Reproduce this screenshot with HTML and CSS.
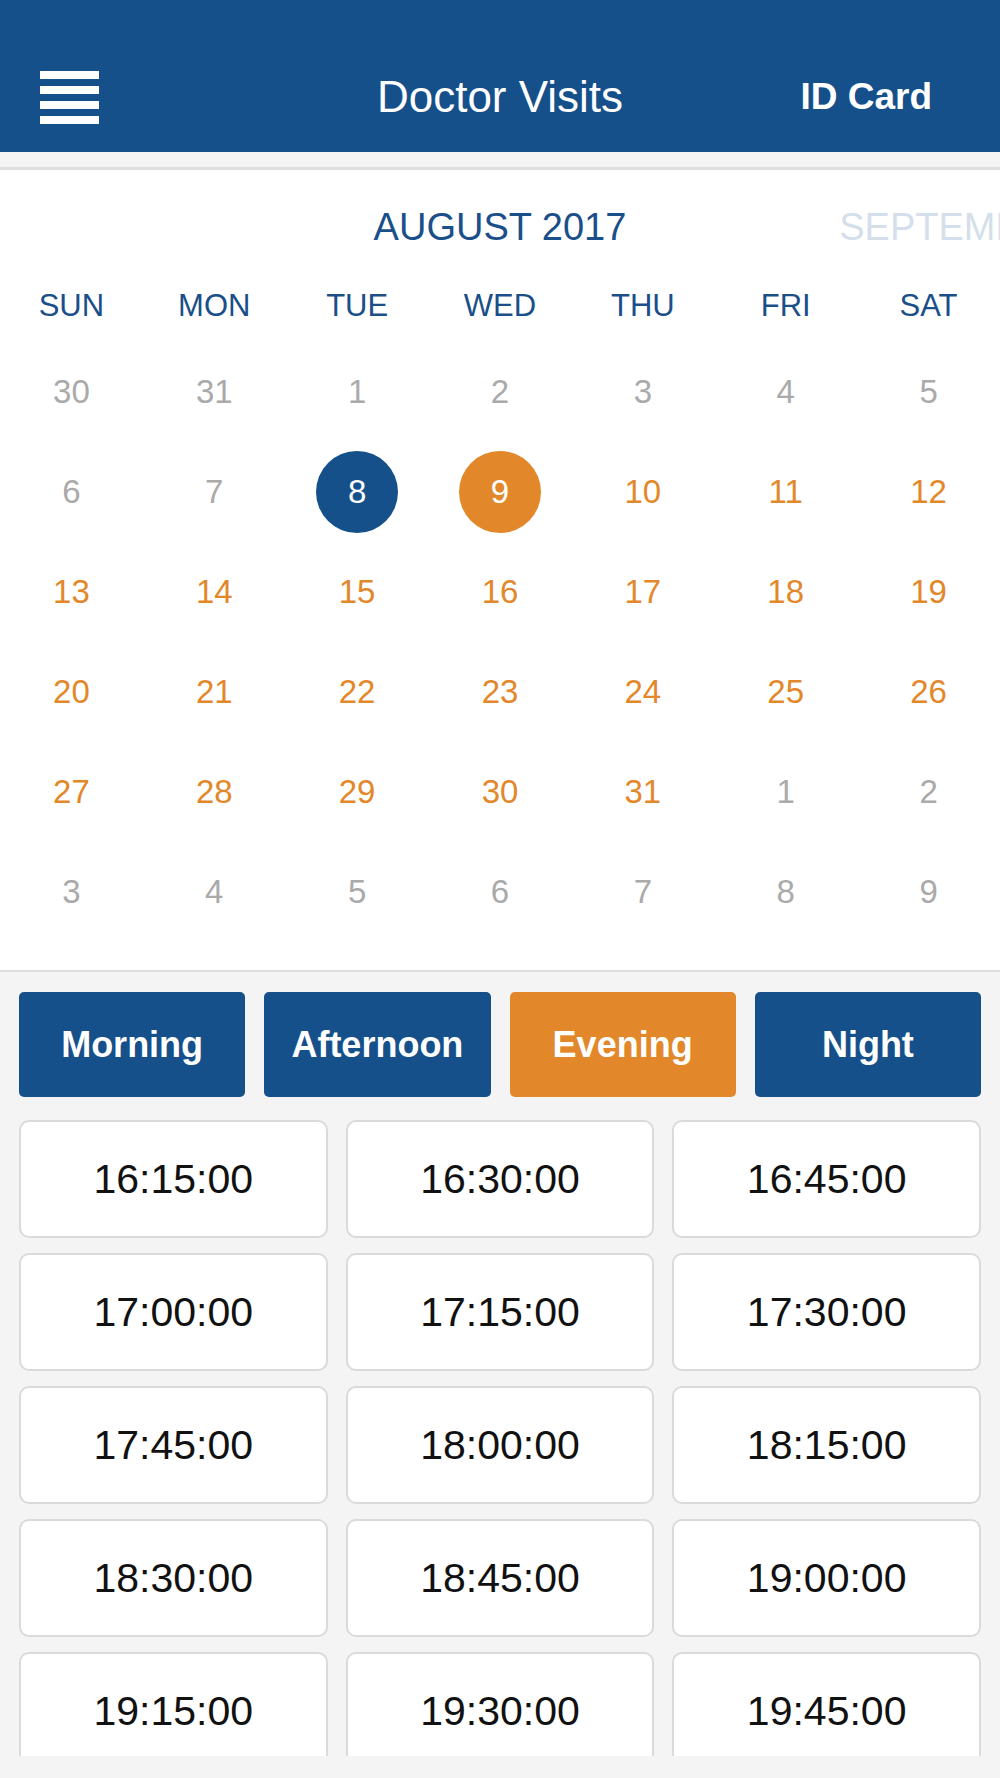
FILE: index.html
```html
<!DOCTYPE html>
<html lang="en">
<head>
    <meta charset="UTF-8">
    <meta name="viewport" content="width=device-width, initial-scale=1.0">
    <title>Doctor Visits</title>
    <link rel="stylesheet" href="styles.css">
</head>
<body>
    <div class="top-bar">
        <div class="menu-btn">
            <span></span><span></span><span></span><span></span>
        </div>
        <div class="top-title">Doctor Visits</div>
        <div class="top-link">ID Card</div>
    </div>
    <div class="top-gap"></div>

    <div class="calendar">
        <div class="month-strip">
            <div class="month-track">
                <div class="month-label">AUGUST 2017</div>
                <div class="month-label month-next">SEPTEMBER 2017</div>
            </div>
        </div>
        <div class="week-row">
            <div>SUN</div><div>MON</div><div>TUE</div><div>WED</div><div>THU</div><div>FRI</div><div>SAT</div>
        </div>
        <div class="day-grid">
            <div class="day muted">30</div><div class="day muted">31</div><div class="day muted">1</div><div class="day muted">2</div><div class="day muted">3</div><div class="day muted">4</div><div class="day muted">5</div>
            <div class="day muted">6</div><div class="day muted">7</div><div class="day"><span class="dot dot-today">8</span></div><div class="day"><span class="dot dot-picked">9</span></div><div class="day open">10</div><div class="day open">11</div><div class="day open">12</div>
            <div class="day open">13</div><div class="day open">14</div><div class="day open">15</div><div class="day open">16</div><div class="day open">17</div><div class="day open">18</div><div class="day open">19</div>
            <div class="day open">20</div><div class="day open">21</div><div class="day open">22</div><div class="day open">23</div><div class="day open">24</div><div class="day open">25</div><div class="day open">26</div>
            <div class="day open">27</div><div class="day open">28</div><div class="day open">29</div><div class="day open">30</div><div class="day open">31</div><div class="day muted">1</div><div class="day muted">2</div>
            <div class="day muted">3</div><div class="day muted">4</div><div class="day muted">5</div><div class="day muted">6</div><div class="day muted">7</div><div class="day muted">8</div><div class="day muted">9</div>
        </div>
    </div>

    <div class="booking">
        <div class="period-row">
            <button class="period">Morning</button>
            <button class="period">Afternoon</button>
            <button class="period period-active">Evening</button>
            <button class="period">Night</button>
        </div>
        <div class="slot-scroll">
            <div class="slot-grid">
                <div class="slot">16:15:00</div>
                <div class="slot">16:30:00</div>
                <div class="slot">16:45:00</div>
                <div class="slot">17:00:00</div>
                <div class="slot">17:15:00</div>
                <div class="slot">17:30:00</div>
                <div class="slot">17:45:00</div>
                <div class="slot">18:00:00</div>
                <div class="slot">18:15:00</div>
                <div class="slot">18:30:00</div>
                <div class="slot">18:45:00</div>
                <div class="slot">19:00:00</div>
                <div class="slot">19:15:00</div>
                <div class="slot">19:30:00</div>
                <div class="slot">19:45:00</div>
            </div>
        </div>
    </div>
</body>
</html>
```

FILE: styles.css
```css
body {
    margin: 0;
    width: 1000px;
    height: 1778px;
    overflow: hidden;
    background-color: #f4f4f4;
    font-family: "Liberation Sans", Arial, sans-serif;
}
.top-bar {
    height: 152px;
    box-sizing: border-box;
    padding-top: 42px;
    background-color: #16508b;
    color: #fff;
    display: grid;
    grid-template-columns: 1fr auto 1fr;
    align-items: center;
}
.menu-btn {
    padding-left: 40px;
    display: flex;
    flex-direction: column;
    gap: 7px;
}
.menu-btn span {
    display: block;
    width: 59px;
    height: 8px;
    background-color: #fff;
}
.top-title {
    font-size: 44px;
}
.top-link {
    justify-self: end;
    padding-right: 68px;
    font-size: 37px;
    font-weight: bold;
}
.top-gap {
    height: 15px;
    background-color: #f4f4f4;
    border-bottom: 3px solid #dedede;
}
.calendar {
    background-color: #fff;
    padding-bottom: 28px;
    border-bottom: 2px solid #dcdcdc;
}
.month-strip {
    height: 114px;
    overflow: hidden;
}
.month-track {
    display: flex;
    padding-left: 248px;
}
.month-label {
    flex: 0 0 504px;
    text-align: center;
    line-height: 114px;
    font-size: 38px;
    color: #1a4f8a;
    white-space: nowrap;
}
.month-next {
    color: #d5dfeb;
}
.week-row {
    display: grid;
    grid-template-columns: repeat(7, 1fr);
    height: 44px;
    line-height: 44px;
    margin-bottom: 14px;
    text-align: center;
    font-size: 31px;
    color: #1a4f8a;
}
.day-grid {
    display: grid;
    grid-template-columns: repeat(7, 1fr);
    grid-auto-rows: 100px;
}
.day {
    display: flex;
    align-items: center;
    justify-content: center;
    font-size: 33px;
}
.muted {
    color: #aaaaaa;
}
.open {
    color: #e3882a;
}
.dot {
    width: 82px;
    height: 82px;
    border-radius: 50%;
    color: #fff;
    display: flex;
    align-items: center;
    justify-content: center;
}
.dot-today {
    background-color: #16508b;
}
.dot-picked {
    background-color: #e3882a;
}
.booking {
    padding: 20px 19px 0;
}
.period-row {
    display: grid;
    grid-template-columns: repeat(4, 1fr);
    gap: 19px;
    margin-bottom: 23px;
}
.period {
    height: 105px;
    border: none;
    border-radius: 5px;
    background-color: #16508b;
    color: #fff;
    font-family: "Liberation Sans", Arial, sans-serif;
    font-size: 36px;
    font-weight: bold;
    padding: 0;
}
.period-active {
    background-color: #e3882a;
}
.slot-scroll {
    height: 636px;
    overflow: hidden;
}
.slot-grid {
    display: grid;
    grid-template-columns: repeat(3, 1fr);
    grid-auto-rows: 118px;
    column-gap: 18px;
    row-gap: 15px;
}
.slot {
    background-color: #fff;
    border: 2px solid #dadada;
    border-radius: 10px;
    display: flex;
    align-items: center;
    justify-content: center;
    font-size: 41px;
    color: #111;
}
```
